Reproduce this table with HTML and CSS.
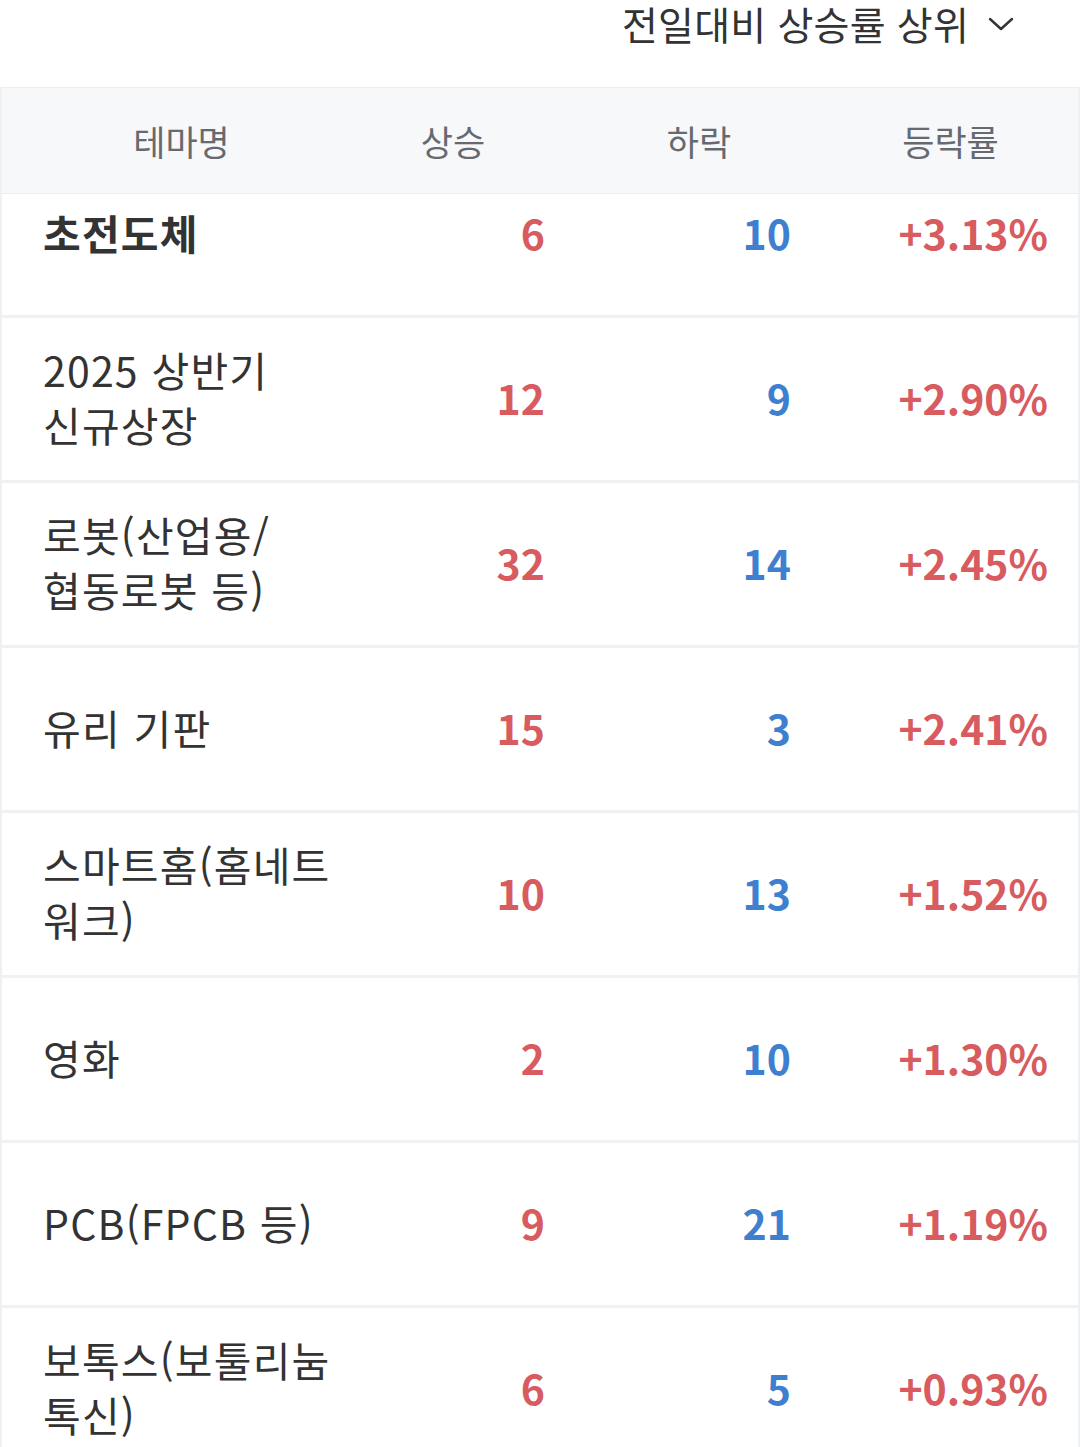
FILE: index.html
```html
<!DOCTYPE html>
<html lang="ko">
<head>
    <meta charset="UTF-8">
    <title>테마 등락률</title>
    <link rel="stylesheet" href="styles.css">
</head>
<body>
    <!-- 정렬 선택 -->
    <div class="sort-bar">
        <button class="sort-select" type="button">
            전일대비 상승률 상위
            <svg class="chevron" width="26" height="16" viewBox="0 0 26 16">
                <path d="M2 3 L13 13 L24 3" fill="none" stroke="#333" stroke-width="2.4" stroke-linecap="round" stroke-linejoin="round"/>
            </svg>
        </button>
    </div>

    <!-- 테마 목록 -->
    <div class="theme-table">
        <div class="table-head">
            <div class="th">테마명</div>
            <div class="th">상승</div>
            <div class="th th-pad">하락</div>
            <div class="th th-pad">등락률</div>
        </div>

        <div class="table-body">
            <div class="row">
                <div class="name strong">초전도체</div>
                <div class="num up">6</div>
                <div class="num down">10</div>
                <div class="num up">+3.13%</div>
            </div>
            <div class="row">
                <div class="name">2025 상반기<br>신규상장</div>
                <div class="num up">12</div>
                <div class="num down">9</div>
                <div class="num up">+2.90%</div>
            </div>
            <div class="row">
                <div class="name">로봇(산업용/<br>협동로봇 등)</div>
                <div class="num up">32</div>
                <div class="num down">14</div>
                <div class="num up">+2.45%</div>
            </div>
            <div class="row">
                <div class="name">유리 기판</div>
                <div class="num up">15</div>
                <div class="num down">3</div>
                <div class="num up">+2.41%</div>
            </div>
            <div class="row">
                <div class="name">스마트홈(홈네트<br>워크)</div>
                <div class="num up">10</div>
                <div class="num down">13</div>
                <div class="num up">+1.52%</div>
            </div>
            <div class="row">
                <div class="name">영화</div>
                <div class="num up">2</div>
                <div class="num down">10</div>
                <div class="num up">+1.30%</div>
            </div>
            <div class="row">
                <div class="name">PCB(FPCB 등)</div>
                <div class="num up">9</div>
                <div class="num down">21</div>
                <div class="num up">+1.19%</div>
            </div>
            <div class="row">
                <div class="name">보톡스(보툴리눔<br>톡신)</div>
                <div class="num up">6</div>
                <div class="num down">5</div>
                <div class="num up">+0.93%</div>
            </div>
        </div>
    </div>
</body>
</html>
```

FILE: styles.css
```css
body {
    margin: 0;
    height: 1447px;
    overflow: hidden;
    background-color: #ffffff;
    font-family: "Noto Sans CJK KR", "Noto Sans", sans-serif;
    color: #333333;
}

.sort-bar {
    height: 87px;
    display: flex;
    justify-content: flex-end;
    align-items: flex-start;
    padding-right: 66px;
}

.sort-select {
    display: flex;
    align-items: center;
    gap: 19px;
    margin-top: -7px;
    padding: 0;
    border: none;
    background: none;
    font-family: inherit;
    font-size: 39px;
    letter-spacing: 0.2px;
    line-height: 60px;
    color: #333333;
}

.chevron {
    margin-top: 2px;
}

.theme-table {
    border-left: 2px solid #eff0f2;
    border-right: 2px solid #eff0f2;
}

.table-head,
.row {
    display: grid;
    grid-template-columns: 359px 184px 246px 257px;
    padding-right: 32px;
}

.table-head {
    position: relative;
    z-index: 1;
    height: 105px;
    align-items: center;
    background-color: #f7f8fa;
    border-top: 1px solid #eceef0;
    border-bottom: 1px solid #eceef0;
}

.th {
    text-align: center;
    font-size: 35px;
    color: #666a70;
}

.th-pad {
    padding-left: 62px;
}

.table-body {
    margin-top: -41px;
}

.row {
    box-sizing: border-box;
    height: 165px;
    padding-bottom: 4px;
    align-items: center;
    border-bottom: 3px solid #f0f1f3;
}

.name {
    padding-left: 41px;
    font-size: 41px;
    letter-spacing: 1.2px;
    line-height: 55px;
    white-space: nowrap;
    color: #333333;
}

.name.strong {
    font-weight: bold;
}

.num {
    text-align: right;
    font-size: 41px;
    font-weight: bold;
}

.up {
    color: #d75b5f;
}

.down {
    color: #3f7fcf;
}
```
